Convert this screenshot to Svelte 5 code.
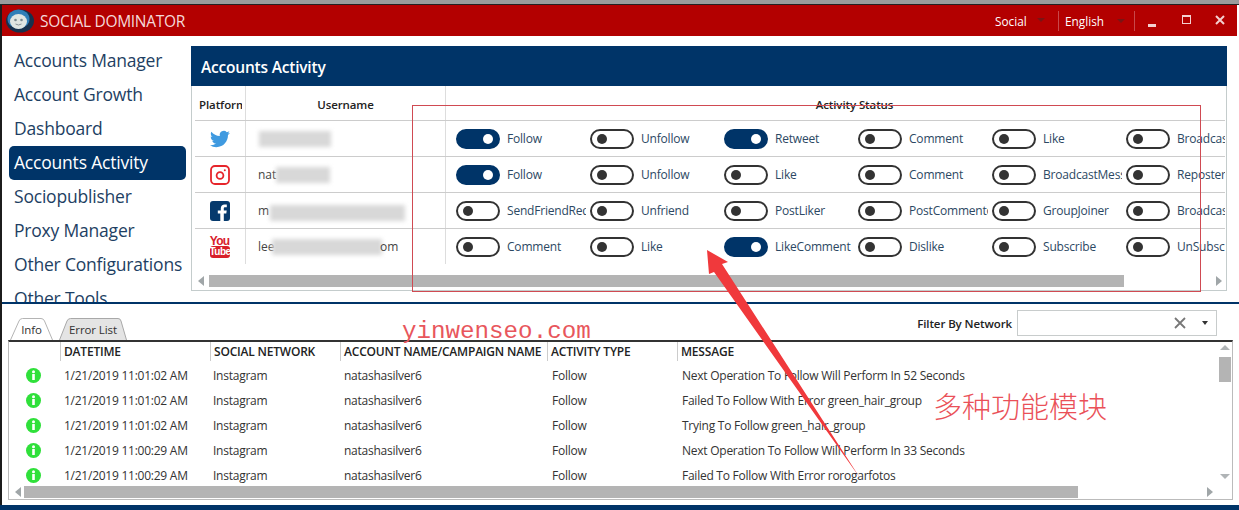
<script>
  const nav = ['Accounts Manager', 'Account Growth', 'Dashboard', 'Accounts Activity', 'Sociopublisher', 'Proxy Manager', 'Other Configurations', 'Other Tools'];

  const rows = [
    { icon: 'twitter', toggles: [['Follow', 1], ['Unfollow', 0], ['Retweet', 1], ['Comment', 0], ['Like', 0], ['Broadcast', 0]] },
    { icon: 'instagram', name: 'nat', toggles: [['Follow', 1], ['Unfollow', 0], ['Like', 0], ['Comment', 0], ['BroadcastMessage', 0], ['Reposter', 0]] },
    { icon: 'facebook', name: 'm', toggles: [['SendFriendRequest', 0], ['Unfriend', 0], ['PostLiker', 0], ['PostCommentor', 0], ['GroupJoiner', 0], ['Broadcast', 0]] },
    { icon: 'youtube', name: 'lee', tail: 'om', toggles: [['Comment', 0], ['Like', 0], ['LikeComment', 1], ['Dislike', 0], ['Subscribe', 0], ['UnSubscribe', 0]] }
  ];

  const columns = ['', 'DATETIME', 'SOCIAL NETWORK', 'ACCOUNT NAME/CAMPAIGN NAME', 'ACTIVITY TYPE', 'MESSAGE'];

  const logs = [
    ['1/21/2019 11:01:02 AM', 'Next Operation To Follow Will Perform In 52 Seconds'],
    ['1/21/2019 11:01:02 AM', 'Failed To Follow With Error green_hair_group'],
    ['1/21/2019 11:01:02 AM', 'Trying To Follow green_hair_group'],
    ['1/21/2019 11:00:29 AM', 'Next Operation To Follow Will Perform In 33 Seconds'],
    ['1/21/2019 11:00:29 AM', 'Failed To Follow With Error rorogarfotos']
  ];
</script>

<div class="screen">
  <div class="strip"></div>

  <div class="window">
    <header class="titlebar">
      <svg class="logo" width="28" height="24" viewBox="0 0 28 24">
        <ellipse cx="14" cy="12" rx="14" ry="11.500" fill="#17314c" />
        <ellipse cx="12.500" cy="10" rx="11" ry="9.500" fill="#2f7fb8" />
        <ellipse cx="12.500" cy="12.500" rx="8.500" ry="7.500" fill="#dfe6e2" />
        <circle cx="9.500" cy="11" r="1.300" fill="#7a8a90" />
        <circle cx="15.500" cy="11" r="1.300" fill="#7a8a90" />
        <path d="M9.500 15 Q12.500 17 15.500 15" fill="none" stroke="#8a9498" />
      </svg>
      <span class="brand">SOCIAL DOMINATOR</span>
      <div class="title-right">
        <span class="pick pick-social">Social</span>
        <span class="pick pick-lang">English</span>
        <svg class="winbtns" width="86" height="14" viewBox="0 0 86 14">
          <rect x="0" y="10" width="8" height="3" fill="#f4d0d0" />
          <rect x="34.500" y="1.500" width="8" height="8" fill="none" stroke="#f4d0d0" />
          <rect x="34" y="1" width="9" height="2" fill="#f4d0d0" />
          <path d="M68 2 L76 10 M76 2 L68 10" stroke="#f4d0d0" stroke-width="2" />
        </svg>
      </div>
    </header>

    <div class="top">
      <nav class="sidebar">
        {#each nav as item}
          <div class="nav-item" class:active={item === 'Accounts Activity'}>{item}</div>
        {/each}
      </nav>

      <main class="content">
        <div class="banner">Accounts Activity</div>
        <div class="panel">
          <div class="thead">
            <div class="c-platform"><span class="clip">Platform</span></div>
            <div class="c-user">Username</div>
            <div class="c-status">Activity Status</div>
          </div>

          {#each rows as row}
            <div class="row">
              <div class="c-platform cell-icon">
                {#if row.icon === 'twitter'}
                  <svg width="20" height="20" viewBox="0 0 24 24"><path fill="#3f9ae0" d="M23.950 4.570a10 10 0 0 1-2.820.770 4.960 4.960 0 0 0 2.160-2.720c-.950.550-2 .950-3.120 1.180a4.920 4.920 0 0 0-8.380 4.480C7.690 8.100 4.070 6.130 1.640 3.160a4.820 4.820 0 0 0-.670 2.480c0 1.710.870 3.210 2.190 4.100a4.900 4.900 0 0 1-2.230-.620v.060a4.920 4.920 0 0 0 3.950 4.830 5 5 0 0 1-2.210.080 4.940 4.940 0 0 0 4.600 3.420A9.870 9.870 0 0 1 0 19.540a14 14 0 0 0 7.560 2.210c9.050 0 14-7.500 14-13.980 0-.210 0-.420-.010-.630a9.940 9.940 0 0 0 2.400-2.550z" /></svg>
                {:else if row.icon === 'instagram'}
                  <svg width="20" height="20" viewBox="0 0 20 20" fill="none" stroke="#e6252b" stroke-width="1.800"><rect x="1" y="1" width="18" height="18" rx="4" /><circle cx="10" cy="10.500" r="3.400" /><circle cx="14.800" cy="5.200" r="1" fill="#e6252b" stroke="none" /></svg>
                {:else if row.icon === 'facebook'}
                  <svg width="20" height="20" viewBox="0 0 20 20"><rect width="20" height="20" rx="3" fill="#063a6d" /><path fill="#fff" d="M13.800 20v-7.600h2.500l.400-3h-2.900V7.600c0-.900.300-1.400 1.500-1.400h1.500V3.500c-.300 0-1.200-.100-2.200-.100-2.200 0-3.800 1.400-3.800 3.900v2.100H7.800v3h2.500V20z" /></svg>
                {:else}
                  <div class="yt"><span class="yt-you">You</span><span class="yt-tube">Tube</span></div>
                {/if}
              </div>
              <div class="c-user cell-user">
                <span>{row.name ?? ''}</span>
                <span class="smear smear-{row.icon}"></span>
                {#if row.tail}<span class="tail">{row.tail}</span>{/if}
              </div>
              <div class="c-status toggles">
                {#each row.toggles as [label, on]}
                  <div class="toggle-cell">
                    <span class="switch" class:on></span>
                    <span class="toggle-label">{label}</span>
                  </div>
                {/each}
              </div>
            </div>
          {/each}

          <div class="hscroll hscroll-top">
            <span class="arrow-left"></span>
            <span class="thumb thumb-top"></span>
            <span class="arrow-right"></span>
          </div>
        </div>
      </main>
    </div>

    <div class="divider"></div>

    <section class="bottom">
      <div class="tabbar">
        <div class="tab tab-on">
          <svg class="tab-shape" width="43" height="22" viewBox="0 0 43 22"><path d="M0.500 22 L9 3 Q10 0.500 12.500 0.500 H31 Q33.500 0.500 34.500 3 L42.500 22" fill="#fff" stroke="#b4b4b4" /></svg>
          <span>Info</span>
        </div>
        <div class="tab tab-off">
          <svg class="tab-shape" width="68" height="22" viewBox="0 0 68 22"><path d="M0.500 22 L8 3 Q9 0.500 11.500 0.500 H59 Q61.500 0.500 62 3 L67.500 22" fill="#e4e4e4" stroke="#a8a8a8" /></svg>
          <span>Error List</span>
        </div>
        <div class="filter">
          <span class="filter-label">Filter By Network</span>
          <div class="filter-box">
            <svg width="12" height="12" viewBox="0 0 12 12"><path d="M1 1 L11 11 M11 1 L1 11" stroke="#777" stroke-width="1.800" /></svg>
            <span class="caret"></span>
          </div>
        </div>
      </div>

      <div class="grid">
        <div class="grid-main">
          <div class="grid-head">
            {#each columns as col}<div class="gc">{col}</div>{/each}
          </div>
          {#each logs as [when, message]}
            <div class="grid-row">
              <div class="gc gc-icon">
                <svg width="15" height="15" viewBox="0 0 15 15"><circle cx="7.500" cy="7.500" r="7.500" fill="#2fe03a" /><circle cx="7.500" cy="3.800" r="1.500" fill="#fff" /><rect x="6.200" y="6" width="2.600" height="6" fill="#fff" /></svg>
              </div>
              <div class="gc">{when}</div>
              <div class="gc">Instagram</div>
              <div class="gc">natashasilver6</div>
              <div class="gc">Follow</div>
              <div class="gc">{message}</div>
            </div>
          {/each}
        </div>
        <div class="vscroll">
          <span class="arrow-up"></span>
          <span class="vthumb"></span>
          <span class="arrow-down"></span>
        </div>
        <div class="hscroll hscroll-low">
          <span class="arrow-left"></span>
          <span class="thumb thumb-low"></span>
          <span class="arrow-right"></span>
        </div>
      </div>
    </section>
  </div>

  <div class="footer"></div>

  <!-- annotations drawn over the screenshot -->
  <div class="mark-box"></div>
  <svg class="mark-arrow" width="1239" height="510" viewBox="0 0 1239 510">
    <polygon fill="#f0393c" points="707,250 728,262 722,264 860,478 714,272 709,274" />
  </svg>
  <div class="mark-site">yinwenseo.com</div>
  <div class="mark-cn">多种功能模块</div>
</div>

<style>
  :global(body) { margin: 0; background: #fff; }

  .screen {
    position: relative; width: 1239px; height: 510px; overflow: hidden;
    background: #fff; color: #333;
    font-family: "Open Sans", "Noto Sans", sans-serif;
    display: flex; flex-direction: column;
  }
  .screen * { box-sizing: border-box; }
  .strip { height: 5px; flex: none; background: #9a9c9b; border-bottom: 1px solid #222; }
  .window { flex: 1; min-height: 0; display: flex; flex-direction: column; margin-right: 2px; border-left: 2px solid #1c1c1c; }

  .titlebar {
    height: 31px; flex: none; background: #b30000; display: flex; align-items: center;
    color: #f5d9d9;
  }
  .logo { margin-left: 4px; flex: none; }
  .brand { margin-left: 6px; font-size: 15.500px; letter-spacing: -0.300px; }
  .title-right { margin-left: auto; display: flex; align-items: center; height: 100%; color: #fff; font-size: 11.800px; }
  .pick { position: relative; display: block; line-height: 20px; }
  .pick::after {
    content: ''; position: absolute; top: 7px; border: 4px solid transparent;
    border-top-color: #7a1414;
  }
  .pick-social { width: 63px; }
  .pick-social::after { left: 42px; }
  .pick-lang {
    width: 77px; padding-left: 6px; border-left: 1px solid #c8484a; border-right: 1px solid #c8484a;
  }
  .pick-lang::after { left: 58px; top: 8px; }
  .winbtns { margin: 0 3px 0 13px; flex: none; }

  .top { height: 266px; flex: none; display: flex; }
  .sidebar { width: 184px; flex: none; padding: 8px 0 0 7px; overflow: hidden; height: 266px; }
  .nav-item {
    height: 34px; line-height: 33px; padding-left: 5px; font-size: 17.500px; color: #1e3f63;
    letter-spacing: -0.200px; white-space: nowrap; width: 177px;
  }
  .nav-item.active { background: #003468; color: #fff; border-radius: 5px; }

  .content { flex: 1; min-width: 0; padding: 10px 10px 0 5px; }
  .banner {
    height: 40px; background: #003468; color: #fff; font-size: 15.500px; font-weight: 600;
    line-height: 43px; padding-left: 10px; letter-spacing: -0.200px;
  }
  .panel { height: 205px; border: 1px solid #c4cccc; border-top: 0; position: relative; overflow: hidden; }

  .thead, .row { display: flex; margin: 0 1px 0 3px; }
  .thead { height: 35px; font-size: 11.500px; font-weight: 600; color: #222; align-items: stretch; border-bottom: 1px solid #ccc; letter-spacing: -0.100px; }
  .thead > div { display: flex; align-items: center; justify-content: center; padding-top: 3px; }
  .thead .c-platform { justify-content: flex-start; padding-left: 4px; }
  .clip { display: block; width: 43px; overflow: hidden; white-space: nowrap; }
  .row { height: 36px; border-bottom: 1px solid #ccc; }
  .row:nth-last-of-type(2) { border-bottom: 0; padding-bottom: 1px; }
  .c-platform { width: 51px; flex: none; border-right: 1px solid #ddd; overflow: hidden; }
  .c-user { width: 200px; flex: none; border-right: 1px solid #ddd; }
  .c-status { flex: 1; min-width: 0; }
  .thead .c-status { padding-left: 38px; }
  .cell-icon { display: flex; align-items: center; justify-content: center; padding-right: 1px; }
  .cell-user { position: relative; display: flex; align-items: center; padding-left: 12px; font-size: 12px; color: #444; }
  .smear { position: absolute; height: 16px; top: 10px; background: #d8d8d8; filter: blur(2px); }
  .smear-twitter { left: 13px; width: 72px; }
  .smear-instagram { left: 30px; width: 54px; }
  .smear-facebook { left: 24px; width: 135px; top: 12px; }
  .smear-youtube { left: 26px; width: 110px; }
  .tail { position: absolute; left: 134px; }

  .yt { width: 20px; display: flex; flex-direction: column; align-items: center; font-family: "Liberation Sans", sans-serif; font-weight: 700; }
  .yt-you { color: #d8202a; font-size: 12px; line-height: 10px; letter-spacing: -0.800px; }
  .yt-tube { color: #fff; background: #d8202a; border-radius: 3px; font-size: 10px; width: 20px; text-align: center; line-height: 12px; letter-spacing: -0.500px; }

  .toggles { display: flex; padding-left: 10px; overflow: hidden; align-items: center; }
  .toggle-cell { width: 134px; flex: none; display: flex; align-items: center; gap: 7px; }
  .switch {
    width: 44px; height: 20px; flex: none; border: 2px solid #333; border-radius: 10px;
    background: #fff; position: relative;
  }
  .switch::after {
    content: ''; position: absolute; left: 5px; top: 3px; width: 10px; height: 10px; border-radius: 50%; background: #333;
  }
  .switch.on { background: #003468; border-color: #003468; }
  .switch.on::after { left: auto; right: 5px; background: #fff; }
  .toggle-label { width: 79px; overflow: hidden; white-space: nowrap; font-size: 12px; color: #2c4863; letter-spacing: -0.200px; }

  .hscroll { position: absolute; display: flex; align-items: center; }
  .hscroll-top { left: 0; right: 0; bottom: 3px; height: 12px; }
  .thumb { position: absolute; top: 0; height: 12px; background: #b4b4b4; }
  .thumb-top { left: 17px; width: 915px; }
  .arrow-left, .arrow-right { position: absolute; top: 1px; border: 5px solid transparent; }
  .arrow-left { border-right: 6px solid #a0a6a8; border-left: 0; left: 6px; }
  .arrow-right { border-left: 6px solid #a0a6a8; border-right: 0; right: 4px; }

  .divider { height: 2px; flex: none; background: #003468; margin-right: -2px; }

  .bottom { flex: 1; min-height: 0; display: flex; flex-direction: column; padding: 0 4px 0 6px; }
  .tabbar { height: 36px; flex: none; display: flex; align-items: flex-end; position: relative; }
  .tab { height: 22px; font-size: 11.500px; letter-spacing: -0.100px; position: relative; color: #333; display: flex; align-items: center; justify-content: center; }
  .tab span { position: relative; }
  .tab-shape { position: absolute; left: 0; top: 0; }
  .tab-on { width: 43px; margin-left: 2px; }
  .tab-off { width: 68px; margin-left: 6px; }
  .filter { position: absolute; right: 16px; top: 6px; display: flex; align-items: center; gap: 5px; }
  .filter-label { font-size: 11.500px; font-weight: 600; color: #222; letter-spacing: -0.100px; }
  .filter-box {
    width: 200px; height: 26px; border: 1px solid #c8cccc;
    display: flex; align-items: center; justify-content: flex-end; padding-right: 8px; gap: 16px;
  }
  .caret { width: 0; height: 0; border: 3.500px solid transparent; border-top: 4px solid #333; border-bottom: 0; }

  .grid { height: 160px; flex: none; border: 1px solid #bbb; border-top: 2px solid #333; position: relative; overflow: hidden; }
  .grid-main { position: relative; }
  .grid-head, .grid-row { display: grid; grid-template-columns: 52px 150px 130px 207px 130px 1fr; }
  .grid-head { height: 19px; font-size: 12px; font-weight: 600; color: #222; line-height: 19px; letter-spacing: -0.200px; margin-bottom: 2px; }
  .grid-head .gc { border-right: 1px solid #ccc; padding-left: 3px; overflow: hidden; white-space: nowrap; }
  .grid-head .gc:last-child { border-right: 0; }
  .grid-row { height: 25px; font-size: 12px; color: #333; line-height: 25px; letter-spacing: -0.250px; }
  .grid-row .gc { padding-left: 3px; white-space: nowrap; }
  .grid-row .gc:nth-child(3) { padding-left: 2px; }
  .grid-row .gc:nth-child(5), .grid-row .gc:nth-child(6) { padding-left: 4px; }
  .gc-icon { display: flex; align-items: center; padding-left: 17px !important; }

  .vscroll { position: absolute; right: 1px; top: 0; bottom: 14px; width: 12px; }
  .vthumb { position: absolute; left: 0; right: 0; top: 15px; height: 25px; background: #b4b4b4; }
  .arrow-up, .arrow-down { position: absolute; left: 1px; border: 5px solid transparent; }
  .arrow-up { top: 3px; border-bottom: 5px solid #b0b4b6; border-top: 0; }
  .arrow-down { bottom: 6px; border-top: 5px solid #b0b4b6; border-bottom: 0; }

  .hscroll-low { left: 0; right: 0; bottom: 1px; height: 12px; }
  .thumb-low { left: 15px; width: 1054px; }
  .hscroll-low .arrow-right { right: 19px; }

  .footer { height: 5px; flex: none; background: #003468; }

  .mark-box { position: absolute; left: 412px; top: 105px; width: 789px; height: 187px; border: 1px solid #d04a52; pointer-events: none; }
  .mark-arrow { position: absolute; left: 0; top: 0; pointer-events: none; }
  .mark-site {
    position: absolute; left: 402px; top: 319px; font-family: "Liberation Mono", monospace; font-size: 24.200px;
    color: #e8565c; line-height: 26px;
  }
  .mark-cn {
    position: absolute; left: 933px; top: 388px; font-family: "Noto Sans CJK SC", sans-serif; font-size: 29px; font-weight: 300;
    color: #ea5058; line-height: 34px;
  }
</style>
